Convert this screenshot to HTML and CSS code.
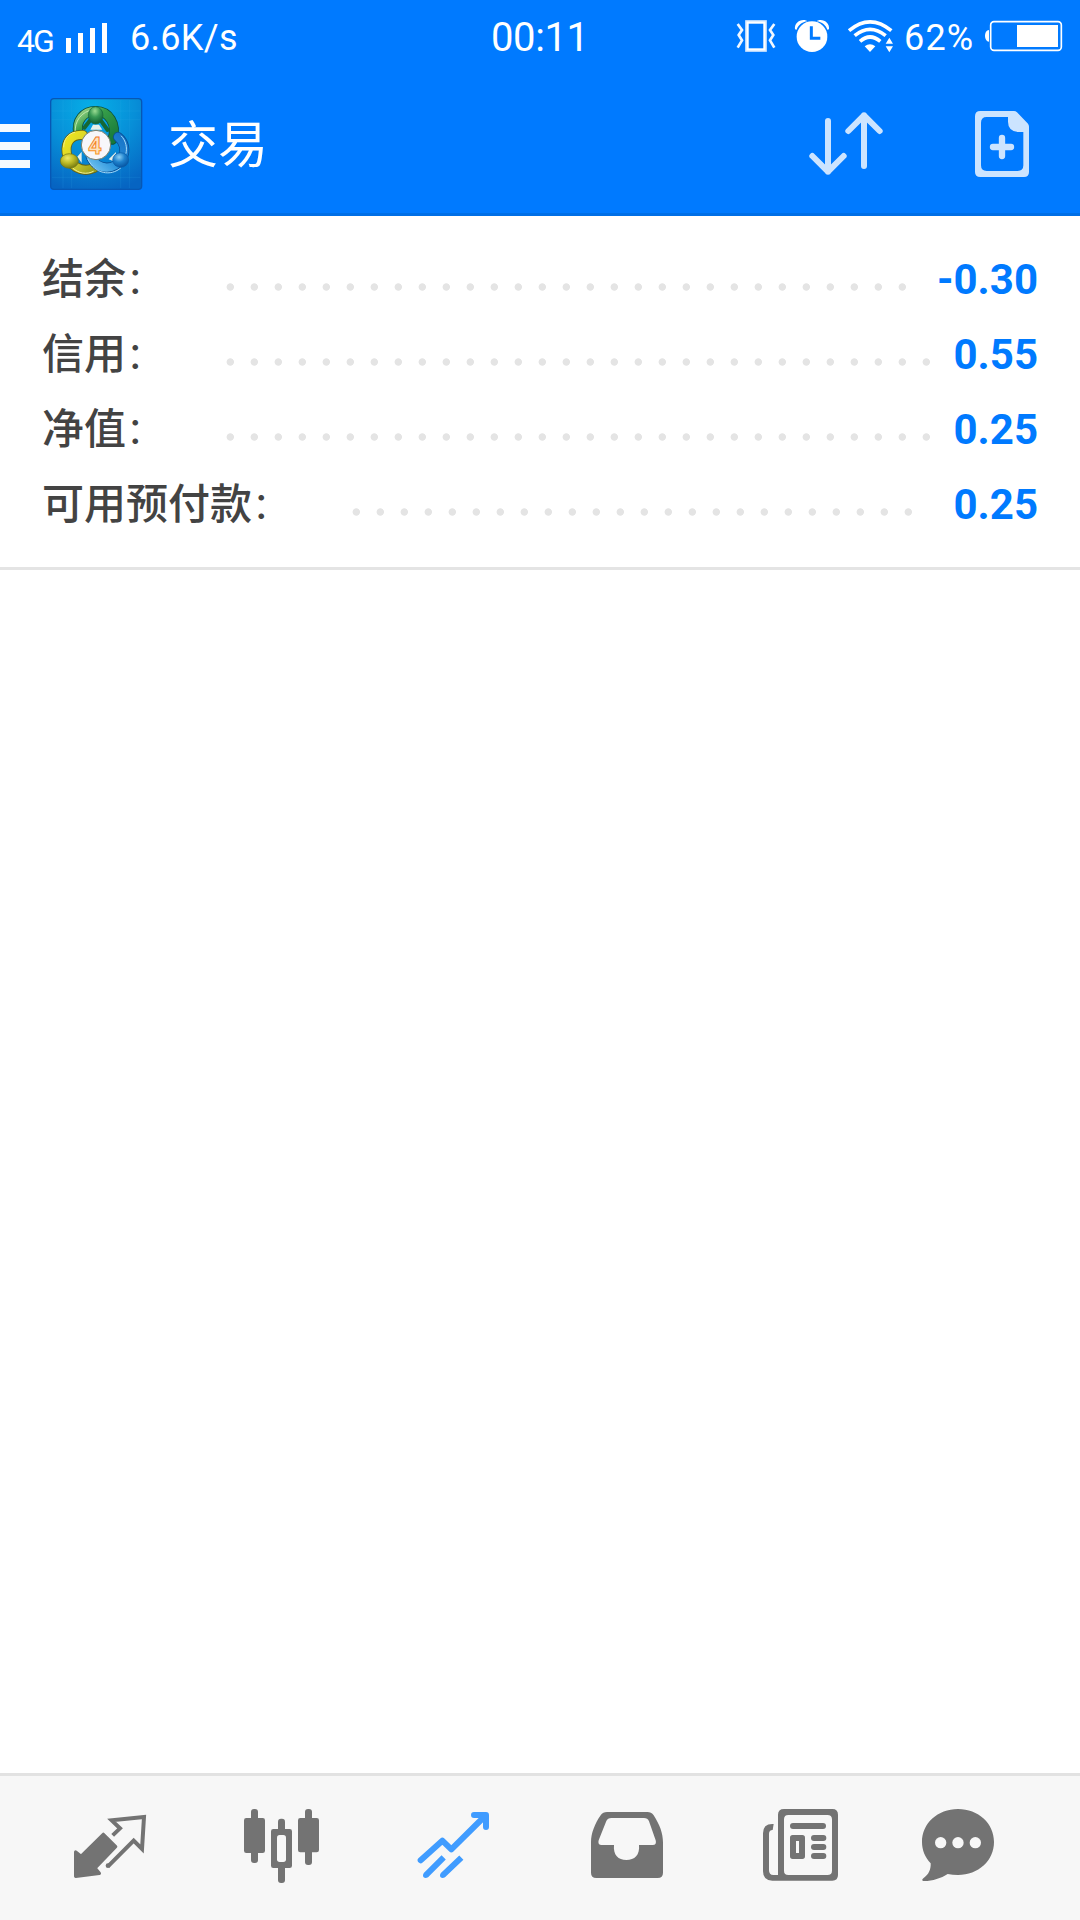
FILE: index.html
```html
<!DOCTYPE html>
<html lang="zh-CN">
<head>
<meta charset="utf-8">
<title>交易</title>
<link rel="stylesheet" href="styles.css">
</head>
<body>
<div class="screen">
  <div class="status">
    <div class="status-left">
      <span class="network">4G</span>
      <svg class="signal" viewBox="195 0 129 216"><path d="M198 114h15v45h-15zM234 99h15v60h-15zM270 84h15v75h-15zM306 69h15v90h-15z"/></svg>
      <span class="speed">6.6K/s</span>
    </div>
    <span class="clock">00:11</span>
    <div class="status-right">
      <svg class="vibrate" viewBox="36 0 159 216">
        <rect x="80" y="65" width="56" height="86" fill="none" stroke="#d4e8ff" stroke-width="9"/>
        <rect x="83" y="68" width="50" height="80" fill="none" stroke="#fff" stroke-width="6"/>
        <path d="M53 72l13 18-10 15 10 16-13 22M163 72l-13 18 10 15-10 16 13 22" fill="none" stroke="#f0f7ff" stroke-width="8"/>
      </svg>
      <svg class="alarm" viewBox="195 0 165 216">
        <circle cx="276" cy="110" r="46"/>
        <path d="M225 88c-2-16 10-28 26-28 5 0 9 2 11 4-16 2-28 12-32 25zM327 88c2-16-10-28-26-28-5 0-9 2-11 4 16 2 28 12 32 25z"/>
        <path d="M274 79v36h27" fill="none" stroke="#007aff" stroke-width="9"/>
      </svg>
      <svg class="wifi" viewBox="360 0 168 216">
        <path d="M387 92q63-53 127 0M404 107q46-38 93 0M420 124q30-26 61 0" fill="none" stroke="#fff" stroke-width="11"/>
        <path d="M434 139q16-13 32 0l-16 17zM508 113l11 18h-22zM508 157l11-18h-22z"/>
      </svg>
      <span class="percent">62%</span>
      <svg class="battery" viewBox="780 0 300 216">
        <rect x="812" y="65" width="212" height="86" rx="10" fill="none" stroke="#fff" stroke-width="5"/>
        <rect x="891" y="75" width="123" height="66"/>
        <path d="M807 90v35c-16 0-16-35 0-35z"/>
      </svg>
    </div>
  </div>

  <header class="header">
    <svg class="menu" viewBox="0 -24 144 432"><path d="M0 132h90v24H0zM0 186h90v24H0zM0 240h90v24H0z"/></svg>
    <svg class="logo" viewBox="144 -24 288 432">
      <defs>
        <radialGradient id="sky" cx=".45" cy=".1" r=".95"><stop offset="0" stop-color="#06afe8"/><stop offset=".5" stop-color="#078fd8"/><stop offset="1" stop-color="#0664c2"/></radialGradient>
        <linearGradient id="green" x1="0" y1="0" x2="1" y2="1"><stop offset="0" stop-color="#a5d88d"/><stop offset=".35" stop-color="#379e49"/><stop offset="1" stop-color="#16793a"/></linearGradient>
        <linearGradient id="yellow" x1="0" y1="0" x2="1" y2="1"><stop offset="0" stop-color="#f0e61e"/><stop offset=".5" stop-color="#d3d02e"/><stop offset="1" stop-color="#979e20"/></linearGradient>
        <linearGradient id="blue" x1="1" y1="0" x2="0" y2="1"><stop offset="0" stop-color="#1672c6"/><stop offset=".6" stop-color="#2a93dc"/><stop offset="1" stop-color="#70c2f0"/></linearGradient>
        <radialGradient id="green-ball" cx=".45" cy=".25" r=".7"><stop offset="0" stop-color="#9bdc92"/><stop offset=".5" stop-color="#399a55"/><stop offset="1" stop-color="#146535"/></radialGradient>
        <radialGradient id="yellow-ball" cx=".4" cy=".3" r=".7"><stop offset="0" stop-color="#eee967"/><stop offset=".5" stop-color="#bdbb27"/><stop offset="1" stop-color="#777c13"/></radialGradient>
        <radialGradient id="blue-ball" cx=".4" cy=".3" r=".7"><stop offset="0" stop-color="#8bd0f5"/><stop offset=".5" stop-color="#1f82cd"/><stop offset="1" stop-color="#0756a4"/></radialGradient>
        <linearGradient id="orange" x1="0" y1="0" x2="0" y2="1"><stop offset="0" stop-color="#f06a22"/><stop offset="1" stop-color="#f9a31c"/></linearGradient>
      </defs>
      <rect x="152" y="56" width="273" height="272" rx="10" fill="url(#sky)" stroke="#0757b4" stroke-width="4"/>
      <path d="M189 60v264M215 60v264M362 60v264M388 60v264M156 93h265M156 119h265M156 292h265" stroke="#35b5ea" stroke-opacity=".22" stroke-width="2"/>
      <g fill="none" stroke-linecap="round">
        <path d="M235 160c-8-38 16-67 52-67 39 0 66 39 50 86" stroke="#0d4f38" stroke-width="30"/>
        <path d="M235 160c-8-38 16-67 52-67 39 0 66 39 50 86" stroke="url(#green)" stroke-width="25"/>
        <path d="M226 159c-4-35 18-65 54-70" stroke="#c0e9ad" stroke-width="3"/>
        <path d="M253 143l21-27M323 150l-23-32" stroke="#156834" stroke-width="12"/>
        <path d="M249 165c-36-3-53 22-49 53 5 37 44 63 82 46" stroke="#635f15" stroke-width="30"/>
        <path d="M249 165c-36-3-53 22-49 53 5 37 44 63 82 46" stroke="url(#yellow)" stroke-width="25"/>
        <path d="M191 201c0-22 12-40 33-44M218 264c17 16 42 21 62 10" stroke="#f2ef92" stroke-width="3"/>
        <path d="M354 171c19 15 25 41 13 62-20 39-73 41-95-3" stroke="#094f96" stroke-width="30"/>
        <path d="M354 171c19 15 25 41 13 62-20 39-73 41-95-3" stroke="url(#blue)" stroke-width="25"/>
        <path d="M264 238c20 44 69 52 98 26M364 168c14 14 18 36 14 52" stroke="#a7dcfa" stroke-width="3"/>
      </g>
      <path d="M271 149l8-15h18l10 15zM232 230l13-15v34zM348 216l-22 22 20 8z" fill="#e6efe8"/>
      <ellipse cx="287" cy="106" rx="22" ry="26" fill="url(#green-ball)" stroke="#15633a" stroke-width="2"/>
      <ellipse cx="208" cy="243" rx="27" ry="22" fill="url(#yellow-ball)" stroke="#737514" stroke-width="2"/>
      <ellipse cx="362" cy="240" rx="24" ry="22" fill="url(#blue-ball)" stroke="#0c5da8" stroke-width="2"/>
      <circle cx="288" cy="195" r="44" fill="#f7f7fa" stroke="#777e6c" stroke-width="3"/>
      <text class="logo-four" x="285" y="221" text-anchor="middle">4</text>
    </svg>
    <h1 class="title">交易</h1>
    <svg class="sort" viewBox="60 -24 270 432"><path d="M144 123v152M97 228l47 47 47-47M252 258V106M205 153l47-47 47 47" fill="none" stroke="#cce4ff" stroke-width="18" stroke-linecap="round" stroke-linejoin="round"/></svg>
    <svg class="new-order" viewBox="570 -24 330 432">
      <path fill="#cce4ff" fill-rule="evenodd" d="M601 93h101q5 0 9 4l33 34q3 4 3 9v136q0 15-15 15H601q-16 0-16-15V109q0-16 16-16zM620 111q-17 0-17 17v128q0 17 17 17h93q17 0 17-17V156h-16q-30-3-30-31v-14z"/>
      <path d="M666 174v54M639 201h54" stroke="#cce4ff" stroke-width="19" stroke-linecap="round"/>
    </svg>
  </header>

  <section class="account">
    <div class="row"><span class="label">结余<span class="colon">：</span></span><span class="dots" style="--dots:29"></span><span class="value">-0.30</span></div>
    <div class="row"><span class="label">信用<span class="colon">：</span></span><span class="dots" style="--dots:30"></span><span class="value">0.55</span></div>
    <div class="row"><span class="label">净值<span class="colon">：</span></span><span class="dots" style="--dots:30"></span><span class="value">0.25</span></div>
    <div class="row"><span class="label">可用预付款<span class="colon">：</span></span><span class="dots" style="--dots:24"></span><span class="value">0.25</span></div>
  </section>

  <main class="positions"></main>

  <nav class="tabs">
    <svg class="tab" viewBox="-48 48 516 432">
      <path d="M190 223L227 260 165 324 178 340 107 349V276L123 289z" stroke="#737373" stroke-width="10" stroke-linejoin="round"/>
      <path d="M218 226l22-21-25-24 97-10-6 96-25-25-77 77" fill="none" stroke="#737373" stroke-width="12"/>
      <circle cx="204" cy="317" r="7"/>
    </svg>
    <svg class="tab" viewBox="468 48 516 432">
      <rect x="612" y="174" width="63" height="105" rx="7"/><rect x="633" y="147" width="21" height="162" rx="9"/>
      <rect x="774" y="174" width="63" height="103" rx="7"/><rect x="795" y="147" width="21" height="168" rx="9"/>
      <rect x="714" y="176" width="21" height="193" rx="9"/><rect x="693" y="207" width="63" height="117" rx="7"/>
      <rect class="cut" x="711" y="225" width="27" height="81" rx="8"/>
    </svg>
    <svg class="tab active" viewBox="-66 48 516 432">
      <path d="M92 301l65-59 27 26 98-97" stroke-linecap="round" stroke-linejoin="round"/>
      <path d="M252 165h36v36" stroke-linecap="round" stroke-linejoin="round"/>
      <path d="M107 346L161 292M158 346L214 293"/>
      <circle cx="107" cy="346" r="8"/><circle cx="158" cy="346" r="8"/>
    </svg>
    <svg class="tab" viewBox="450 48 516 432">
      <path fill-rule="evenodd" d="M651 156h121q12 0 19 10c18 28 28 54 28 81v91q0 16-16 16H619q-16 0-16-16v-91c0-27 12-57 29-81q7-10 19-10zM664 174q-11 0-15 9l-23 58q-4 14 9 14h37c-3 30 13 45 37 45 25 0 41-15 38-45h41q13 0 9-14l-20-57q-4-10-15-10z"/>
    </svg>
    <svg class="tab" viewBox="-84 48 516 432">
      <path fill-rule="evenodd" d="M132 147h145q17 0 17 17v181q0 17-17 17H97q-28 0-28-28V220q0-28 28-28h4l-3 18q-11 0-11 12v109q0 14 13 14h14V164q0-17 18-17zM145 165q-13 0-13 13v154q0 13 13 13h117q14 0 14-13V178q0-13-14-13z"/>
      <rect x="150" y="189" width="108" height="18" rx="9"/>
      <path fill-rule="evenodd" d="M158 225h29q8 0 8 8v56q0 8-8 8h-29q-8 0-8-8v-56q0-8 8-8zM168 243v36h9v-36z"/>
      <rect x="213" y="225" width="46" height="18" rx="9"/><rect x="213" y="252" width="46" height="18" rx="9"/><rect x="213" y="279" width="46" height="18" rx="9"/>
    </svg>
    <svg class="tab" viewBox="432 48 516 432">
      <path d="M654 147c61 0 108 43 108 99s-47 99-108 99c-11 0-21-1-31-3-20 13-45 21-70 21-9 0-7-6-2-9 15-10 22-26 21-44-17-18-26-40-26-64 0-56 47-99 108-99z"/>
      <circle class="cut" cx="602" cy="248" r="17"/><circle class="cut" cx="654" cy="248" r="17"/><circle class="cut" cx="706" cy="248" r="17"/>
    </svg>
  </nav>
</div>
</body>
</html>
```
FILE: styles.css
```css
* { box-sizing: border-box; }
body { margin: 0; background: #fff; font-family: Roboto, "Noto Sans CJK SC", sans-serif; }
svg { display: block; flex: none; }

.screen { width: 1080px; height: 1920px; display: flex; flex-direction: column; }

.status {
  height: 72px;
  display: grid;
  grid-template-columns: 491px 1fr 348px;
  background: #007aff;
  color: #fff;
  fill: #fff;
  line-height: 72px;
  white-space: nowrap;
}
.status-left, .status-right { display: flex; align-items: flex-start; }
.network { width: 48px; margin-left: 17px; padding-top: 5px; font-size: 32px; letter-spacing: -2px; }
.signal { width: 43px; height: 72px; }
.speed { margin-left: 22px; padding-top: 2px; font-size: 36px; letter-spacing: .3px; }
.clock { padding-top: 2px; font-size: 40px; letter-spacing: -.4px; }
.vibrate { width: 53px; height: 72px; }
.alarm { width: 55px; height: 72px; }
.wifi { width: 56px; height: 72px; }
.percent { width: 84px; padding: 2px 0 0 8px; font-size: 36px; letter-spacing: 1.2px; }
.battery { width: 100px; height: 72px; }

.header {
  height: 144px;
  display: flex;
  background: #007aff;
  box-shadow: inset 0 -3px #006fe6;
}
.menu { width: 48px; height: 144px; fill: #f5faff; }
.logo { width: 96px; height: 144px; }
.logo-four { font: 700 68px "Open Sans", sans-serif; fill: #fde3bf; stroke: url(#orange); stroke-width: 3px; }
.title { flex: 1; margin: 0; padding: 2px 0 0 24px; font-size: 50px; line-height: 144px; font-weight: 400; color: #fff; }
.sort { width: 90px; height: 144px; margin-right: 80px; }
.new-order { width: 110px; height: 144px; }

.account {
  height: 354px;
  padding: 26px 42px 0;
  border-bottom: 3px solid #e4e4e4;
}
.row { height: 75px; display: flex; align-items: center; line-height: 75px; font-size: 42px; }
.label { padding-top: 2px; color: #434343; font-weight: 500; }
.colon { display: inline-block; width: 42px; font-size: 37px; font-weight: 400; }
.dots {
  width: calc(var(--dots) * 24px);
  height: 10px;
  margin: 15px auto 0 58px;
  background: radial-gradient(circle at 4.3px 5px, #e4e4e4 3.3px, transparent 4.1px) 0 0 / 24px 10px repeat-x;
}
.value { color: #007aff; font-weight: 700; }

.positions { flex: 1; }

.tabs {
  height: 147px;
  padding-left: 24px;
  display: grid;
  grid-template-columns: repeat(6, 172px);
  border-top: 3px solid #e2e2e2;
  background: #f7f7f7;
  fill: #737373;
}
.tab { width: 172px; height: 144px; }
.cut { fill: #f7f7f7; }
.active { fill: #409cff; }
.active path { fill: none; stroke: #409cff; stroke-width: 18px; }
```
